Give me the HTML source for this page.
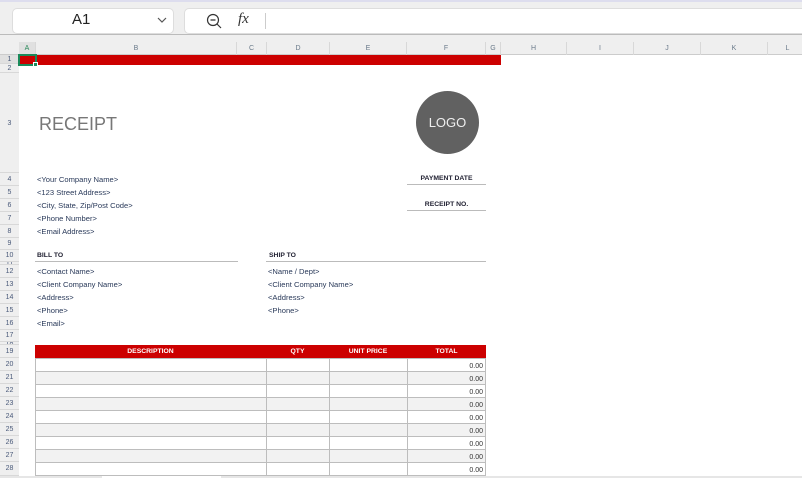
<!DOCTYPE html>
<html><head><meta charset="utf-8"><style>
*{margin:0;padding:0;box-sizing:border-box}
body{width:802px;height:478px;overflow:hidden;background:#fff;font-family:"Liberation Sans",sans-serif;position:relative}
.a{position:absolute}
.t{position:absolute;font-size:7.6px;color:#2a3a5a;white-space:nowrap}
.b{font-weight:bold;font-size:6.8px;color:#223;letter-spacing:0}
.rh{position:absolute;left:0;width:19px;text-align:center;font-size:7px;color:#4a5a7a;border-bottom:1px solid #d8d8d8;background:#efefef}
.ch{position:absolute;top:42px;height:13px;font-size:7px;color:#6a7a8a;text-align:center;line-height:13px;border-right:1px solid #d8d8d8}
</style></head><body>
<div class="a" style="left:0;top:0;width:802px;height:42px;background:#efefef;border-top:2px solid #dde"></div>
<div class="a" style="left:12px;top:8px;width:162px;height:26px;background:#fff;border:1px solid #ddd;border-radius:5px"></div>
<div class="a" style="left:72px;top:11px;font-size:15px;color:#222">A1</div>
<svg class="a" style="left:156px;top:15px" width="12" height="10"><path d="M2 3l4 4 4-4" stroke="#555" fill="none" stroke-width="1.2"/></svg>
<div class="a" style="left:184px;top:8px;width:630px;height:26px;background:#fff;border:1px solid #ddd;border-radius:5px"></div>
<svg class="a" style="left:206px;top:13px" width="18" height="16"><circle cx="7" cy="7" r="5.5" stroke="#333" fill="none" stroke-width="1.2"/><path d="M4.5 7h5M11 11l4 4" stroke="#333" stroke-width="1.2"/></svg>
<div class="a" style="left:238px;top:11px;font-size:15px;font-style:italic;font-family:'Liberation Serif',serif;color:#333">fx</div>
<div class="a" style="left:265px;top:13px;width:1px;height:16px;background:#ccc"></div>
<div class="a" style="left:0;top:34px;width:802px;height:1px;background:#bbb"></div>
<div class="a" style="left:0;top:42px;width:802px;height:13px;background:#efefef;border-bottom:1px solid #ccc"></div>
<div class="ch" style="left:19px;width:17px;background:#e0e0e0;color:#2a8a5a">A</div>
<div class="ch" style="left:36px;width:201px">B</div>
<div class="ch" style="left:237px;width:30px">C</div>
<div class="ch" style="left:267px;width:63px">D</div>
<div class="ch" style="left:330px;width:77px">E</div>
<div class="ch" style="left:407px;width:79px">F</div>
<div class="ch" style="left:486px;width:15px">G</div>
<div class="ch" style="left:501px;width:66px">H</div>
<div class="ch" style="left:567px;width:67px">I</div>
<div class="ch" style="left:634px;width:67px">J</div>
<div class="ch" style="left:701px;width:67px">K</div>
<div class="ch" style="left:768px;width:40px">L</div>
<div class="a" style="left:0;top:55px;width:19px;height:423px;background:#efefef;border-right:1px solid #ccc"></div>
<div class="rh" style="top:55px;height:9px;line-height:9px;background:#e0e0e0">1</div>
<div class="rh" style="top:64px;height:9px;line-height:9px">2</div>
<div class="rh" style="top:73px;height:100px;line-height:102px">3</div>
<div class="rh" style="top:173px;height:13px;line-height:13px">4</div>
<div class="rh" style="top:186px;height:13px;line-height:13px">5</div>
<div class="rh" style="top:199px;height:13px;line-height:13px">6</div>
<div class="rh" style="top:212px;height:13px;line-height:13px">7</div>
<div class="rh" style="top:225px;height:13px;line-height:13px">8</div>
<div class="rh" style="top:238px;height:12px;line-height:12px">9</div>
<div class="rh" style="top:250px;height:12px;line-height:12px">10</div>
<div class="rh" style="top:262px;height:3px;line-height:3px;overflow:hidden">11</div>
<div class="rh" style="top:265px;height:13px;line-height:13px">12</div>
<div class="rh" style="top:278px;height:13px;line-height:13px">13</div>
<div class="rh" style="top:291px;height:13px;line-height:13px">14</div>
<div class="rh" style="top:304px;height:13px;line-height:13px">15</div>
<div class="rh" style="top:317px;height:13px;line-height:13px">16</div>
<div class="rh" style="top:330px;height:12px;line-height:12px">17</div>
<div class="rh" style="top:342px;height:3px;line-height:3px;overflow:hidden">18</div>
<div class="rh" style="top:345px;height:13px;line-height:13px">19</div>
<div class="rh" style="top:358px;height:13px;line-height:13px">20</div>
<div class="rh" style="top:371px;height:13px;line-height:13px">21</div>
<div class="rh" style="top:384px;height:13px;line-height:13px">22</div>
<div class="rh" style="top:397px;height:13px;line-height:13px">23</div>
<div class="rh" style="top:410px;height:13px;line-height:13px">24</div>
<div class="rh" style="top:423px;height:13px;line-height:13px">25</div>
<div class="rh" style="top:436px;height:13px;line-height:13px">26</div>
<div class="rh" style="top:449px;height:13px;line-height:13px">27</div>
<div class="rh" style="top:462px;height:14px;line-height:14px">28</div>
<div class="a" style="left:19px;top:55px;width:482px;height:10px;background:#cc0000"></div>
<div class="a" style="left:18px;top:54px;width:19px;height:12px;border:2px solid #1a8a5a"></div>
<div class="a" style="left:33px;top:62px;width:5px;height:5px;background:#1a8a5a;border:1px solid #fff"></div>
<div class="a" style="left:39px;top:114px;font-size:18px;color:#777">RECEIPT</div>
<div class="a" style="left:416px;top:91px;width:63px;height:63px;border-radius:50%;background:#616161;color:#eee;font-size:13px;text-align:center;line-height:63px">LOGO</div>
<div class="t" style="left:37px;top:175px">&lt;Your Company Name&gt;</div>
<div class="t" style="left:37px;top:188px">&lt;123 Street Address&gt;</div>
<div class="t" style="left:37px;top:201px">&lt;City, State, Zip/Post Code&gt;</div>
<div class="t" style="left:37px;top:214px">&lt;Phone Number&gt;</div>
<div class="t" style="left:37px;top:227px">&lt;Email Address&gt;</div>
<div class="t b" style="left:407px;width:79px;text-align:center;top:175px">PAYMENT DATE</div>
<div class="a" style="left:407px;top:184px;width:79px;height:1px;background:#bbb"></div>
<div class="t b" style="left:407px;width:79px;text-align:center;top:201px">RECEIPT NO.</div>
<div class="a" style="left:407px;top:210px;width:79px;height:1px;background:#bbb"></div>
<div class="t b" style="left:37px;top:252px">BILL TO</div>
<div class="a" style="left:35px;top:261px;width:203px;height:1px;background:#bbb"></div>
<div class="t b" style="left:269px;top:252px">SHIP TO</div>
<div class="a" style="left:266px;top:261px;width:220px;height:1px;background:#bbb"></div>
<div class="t" style="left:37px;top:267px">&lt;Contact Name&gt;</div>
<div class="t" style="left:37px;top:280px">&lt;Client Company Name&gt;</div>
<div class="t" style="left:37px;top:293px">&lt;Address&gt;</div>
<div class="t" style="left:37px;top:306px">&lt;Phone&gt;</div>
<div class="t" style="left:37px;top:319px">&lt;Email&gt;</div>
<div class="t" style="left:268px;top:267px">&lt;Name / Dept&gt;</div>
<div class="t" style="left:268px;top:280px">&lt;Client Company Name&gt;</div>
<div class="t" style="left:268px;top:293px">&lt;Address&gt;</div>
<div class="t" style="left:268px;top:306px">&lt;Phone&gt;</div>
<div class="a" style="left:35px;top:345px;width:451px;height:13px;background:#cc0000"></div>
<div class="t b" style="left:35px;width:231px;text-align:center;top:348px;color:#fff">DESCRIPTION</div>
<div class="t b" style="left:266px;width:63px;text-align:center;top:348px;color:#fff">QTY</div>
<div class="t b" style="left:329px;width:78px;text-align:center;top:348px;color:#fff">UNIT PRICE</div>
<div class="t b" style="left:407px;width:79px;text-align:center;top:348px;color:#fff">TOTAL</div>
<div class="a" style="left:35px;top:358px;width:451px">
<svg width="451" height="118" style="display:block">
<g fill="#f2f2f2"><rect y="13" width="451" height="13"/><rect y="39" width="451" height="13"/><rect y="65" width="451" height="13"/><rect y="91" width="451" height="13"/></g>
<g stroke="#bdbdbd" stroke-width="1" fill="none">
<rect x="0.5" y="0.5" width="450" height="117"/>
<path d="M231.5 0V118M294.5 0V118M372.5 0V118M0 13.5H451M0 26.5H451M0 39.5H451M0 52.5H451M0 65.5H451M0 78.5H451M0 91.5H451M0 104.5H451"/>
</g>
<g font-family="Liberation Sans" font-size="7" fill="#333" text-anchor="end">
<text x="448" y="10">0.00</text><text x="448" y="23">0.00</text><text x="448" y="36">0.00</text><text x="448" y="49">0.00</text><text x="448" y="62">0.00</text><text x="448" y="75">0.00</text><text x="448" y="88">0.00</text><text x="448" y="101">0.00</text><text x="448" y="114">0.00</text>
</g></svg></div>
<div class="a" style="left:0;top:476px;width:802px;height:2px;background:#e6e6e6"></div>
<div class="a" style="left:102px;top:476px;width:119px;height:2px;background:#fff"></div>
</body></html>
